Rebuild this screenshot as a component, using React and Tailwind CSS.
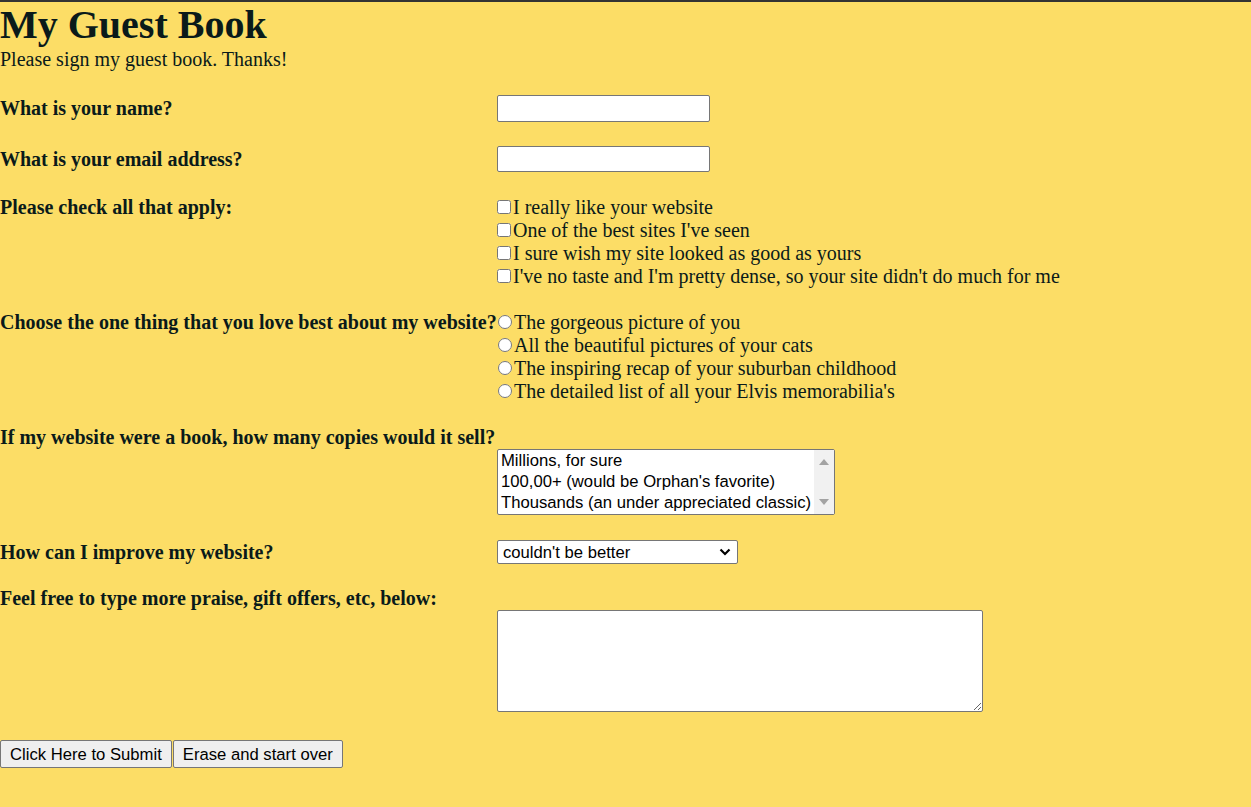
import React from 'react';

const serif = "font-['Liberation_Serif','Times_New_Roman',serif]";
const sans = "font-['Liberation_Sans',Arial,sans-serif]";

const checks = [
  'I really like your website',
  "One of the best sites I've seen",
  'I sure wish my site looked as good as yours',
  "I've no taste and I'm pretty dense, so your site didn't do much for me",
];

const radios = [
  'The gorgeous picture of you',
  'All the beautiful pictures of your cats',
  'The inspiring recap of your suburban childhood',
  "The detailed list of all your Elvis memorabilia's",
];

const copies = [
  'Millions, for sure',
  "100,00+ (would be Orphan's favorite)",
  'Thousands (an under appreciated classic)',
];

// label column on the left, control on the right
const Row = ({ label, className = '', children }) => (
  <div className={`flex ${className}`}>
    <div className="w-[497px] shrink-0 whitespace-nowrap font-bold leading-[23px]">{label}</div>
    <div>{children}</div>
  </div>
);

const App = () => {
  return (
    <div className={`min-h-[807px] bg-[#fcdd66] border-t-2 border-[#333333] text-[#0a1a1a] text-[20px] leading-[23px] ${serif}`}>
      <h1 className="text-[40px] leading-[46px] font-bold">My Guest Book</h1>
      <p>Please sign my guest book. Thanks!</p>

      <form className="mt-[24px]">
        <Row label="What is your name?" className="items-center">
          <input type="text" className="block w-[213px] h-[27px] bg-white border border-[#767676] rounded-[2px]" />
        </Row>

        <Row label="What is your email address?" className="items-center mt-[24px]">
          <input type="text" className="block w-[213px] h-[26px] bg-white border border-[#767676] rounded-[2px]" />
        </Row>

        <Row label="Please check all that apply:" className="mt-[24px]">
          {checks.map((c) => (
            <label key={c} className="block whitespace-nowrap">
              <input type="checkbox" className="w-[14px] h-[14px] mr-[2px] mb-[2px] align-baseline" />
              {c}
            </label>
          ))}
        </Row>

        <Row label="Choose the one thing that you love best about my website?" className="mt-[23px]">
          {radios.map((r) => (
            <label key={r} className="block whitespace-nowrap">
              <input type="radio" name="best" className="w-[14px] h-[14px] mr-[2px] mb-[1px] ml-px align-baseline" />
              {r}
            </label>
          ))}
        </Row>

        <div className="mt-[23px] font-bold whitespace-nowrap">
          If my website were a book, how many copies would it sell?
        </div>
        <div className="flex">
          <div className="w-[497px] shrink-0" />
          <div className={`flex w-[338px] h-[66px] bg-white border border-[#767676] rounded-[2px] text-black text-[16.67px] leading-[21px] ${sans}`}>
            <div className="flex-1 pl-[3px] overflow-hidden">
              {copies.map((c) => (
                <div key={c} className="whitespace-nowrap">{c}</div>
              ))}
            </div>
            <div className="w-[20px] bg-[#f1f1f1] flex flex-col items-center justify-between py-[9px]">
              <svg width="10" height="6" viewBox="0 0 10 6"><path d="M5 0 L10 6 L0 6 Z" fill="#a3a3a3" /></svg>
              <svg width="10" height="6" viewBox="0 0 10 6"><path d="M0 0 L10 0 L5 6 Z" fill="#a3a3a3" /></svg>
            </div>
          </div>
        </div>

        <Row label="How can I improve my website?" className="items-center mt-[25px]">
          <div className={`flex items-center justify-between w-[241px] h-[24px] bg-white border border-[#767676] rounded-[2px] pl-[5px] pr-[6px] text-black text-[16.67px] ${sans}`}>
            <span className="whitespace-nowrap">couldn't be better</span>
            <svg width="12" height="8" viewBox="0 0 12 8">
              <path d="M1.5 1.5 L6 6 L10.5 1.5" fill="none" stroke="#000" strokeWidth="2.2" />
            </svg>
          </div>
        </Row>

        <div className="mt-[23px] font-bold whitespace-nowrap">Feel free to type more praise, gift offers, etc, below:</div>
        <div className="flex">
          <div className="w-[497px] shrink-0" />
          <textarea className="block w-[486px] h-[102px] bg-white border border-[#767676] rounded-[2px] resize" />
        </div>

        <div className={`flex mt-[28px] text-black text-[16.67px] ${sans}`}>
          <button type="submit" className="h-[28px] px-[9px] bg-[#efefef] border border-[#767676] rounded-[2px] whitespace-nowrap">
            Click Here to Submit
          </button>
          <button type="reset" className="h-[28px] ml-px px-[9px] bg-[#efefef] border border-[#767676] rounded-[2px] whitespace-nowrap">
            Erase and start over
          </button>
        </div>
      </form>
    </div>
  );
};

export default App;
